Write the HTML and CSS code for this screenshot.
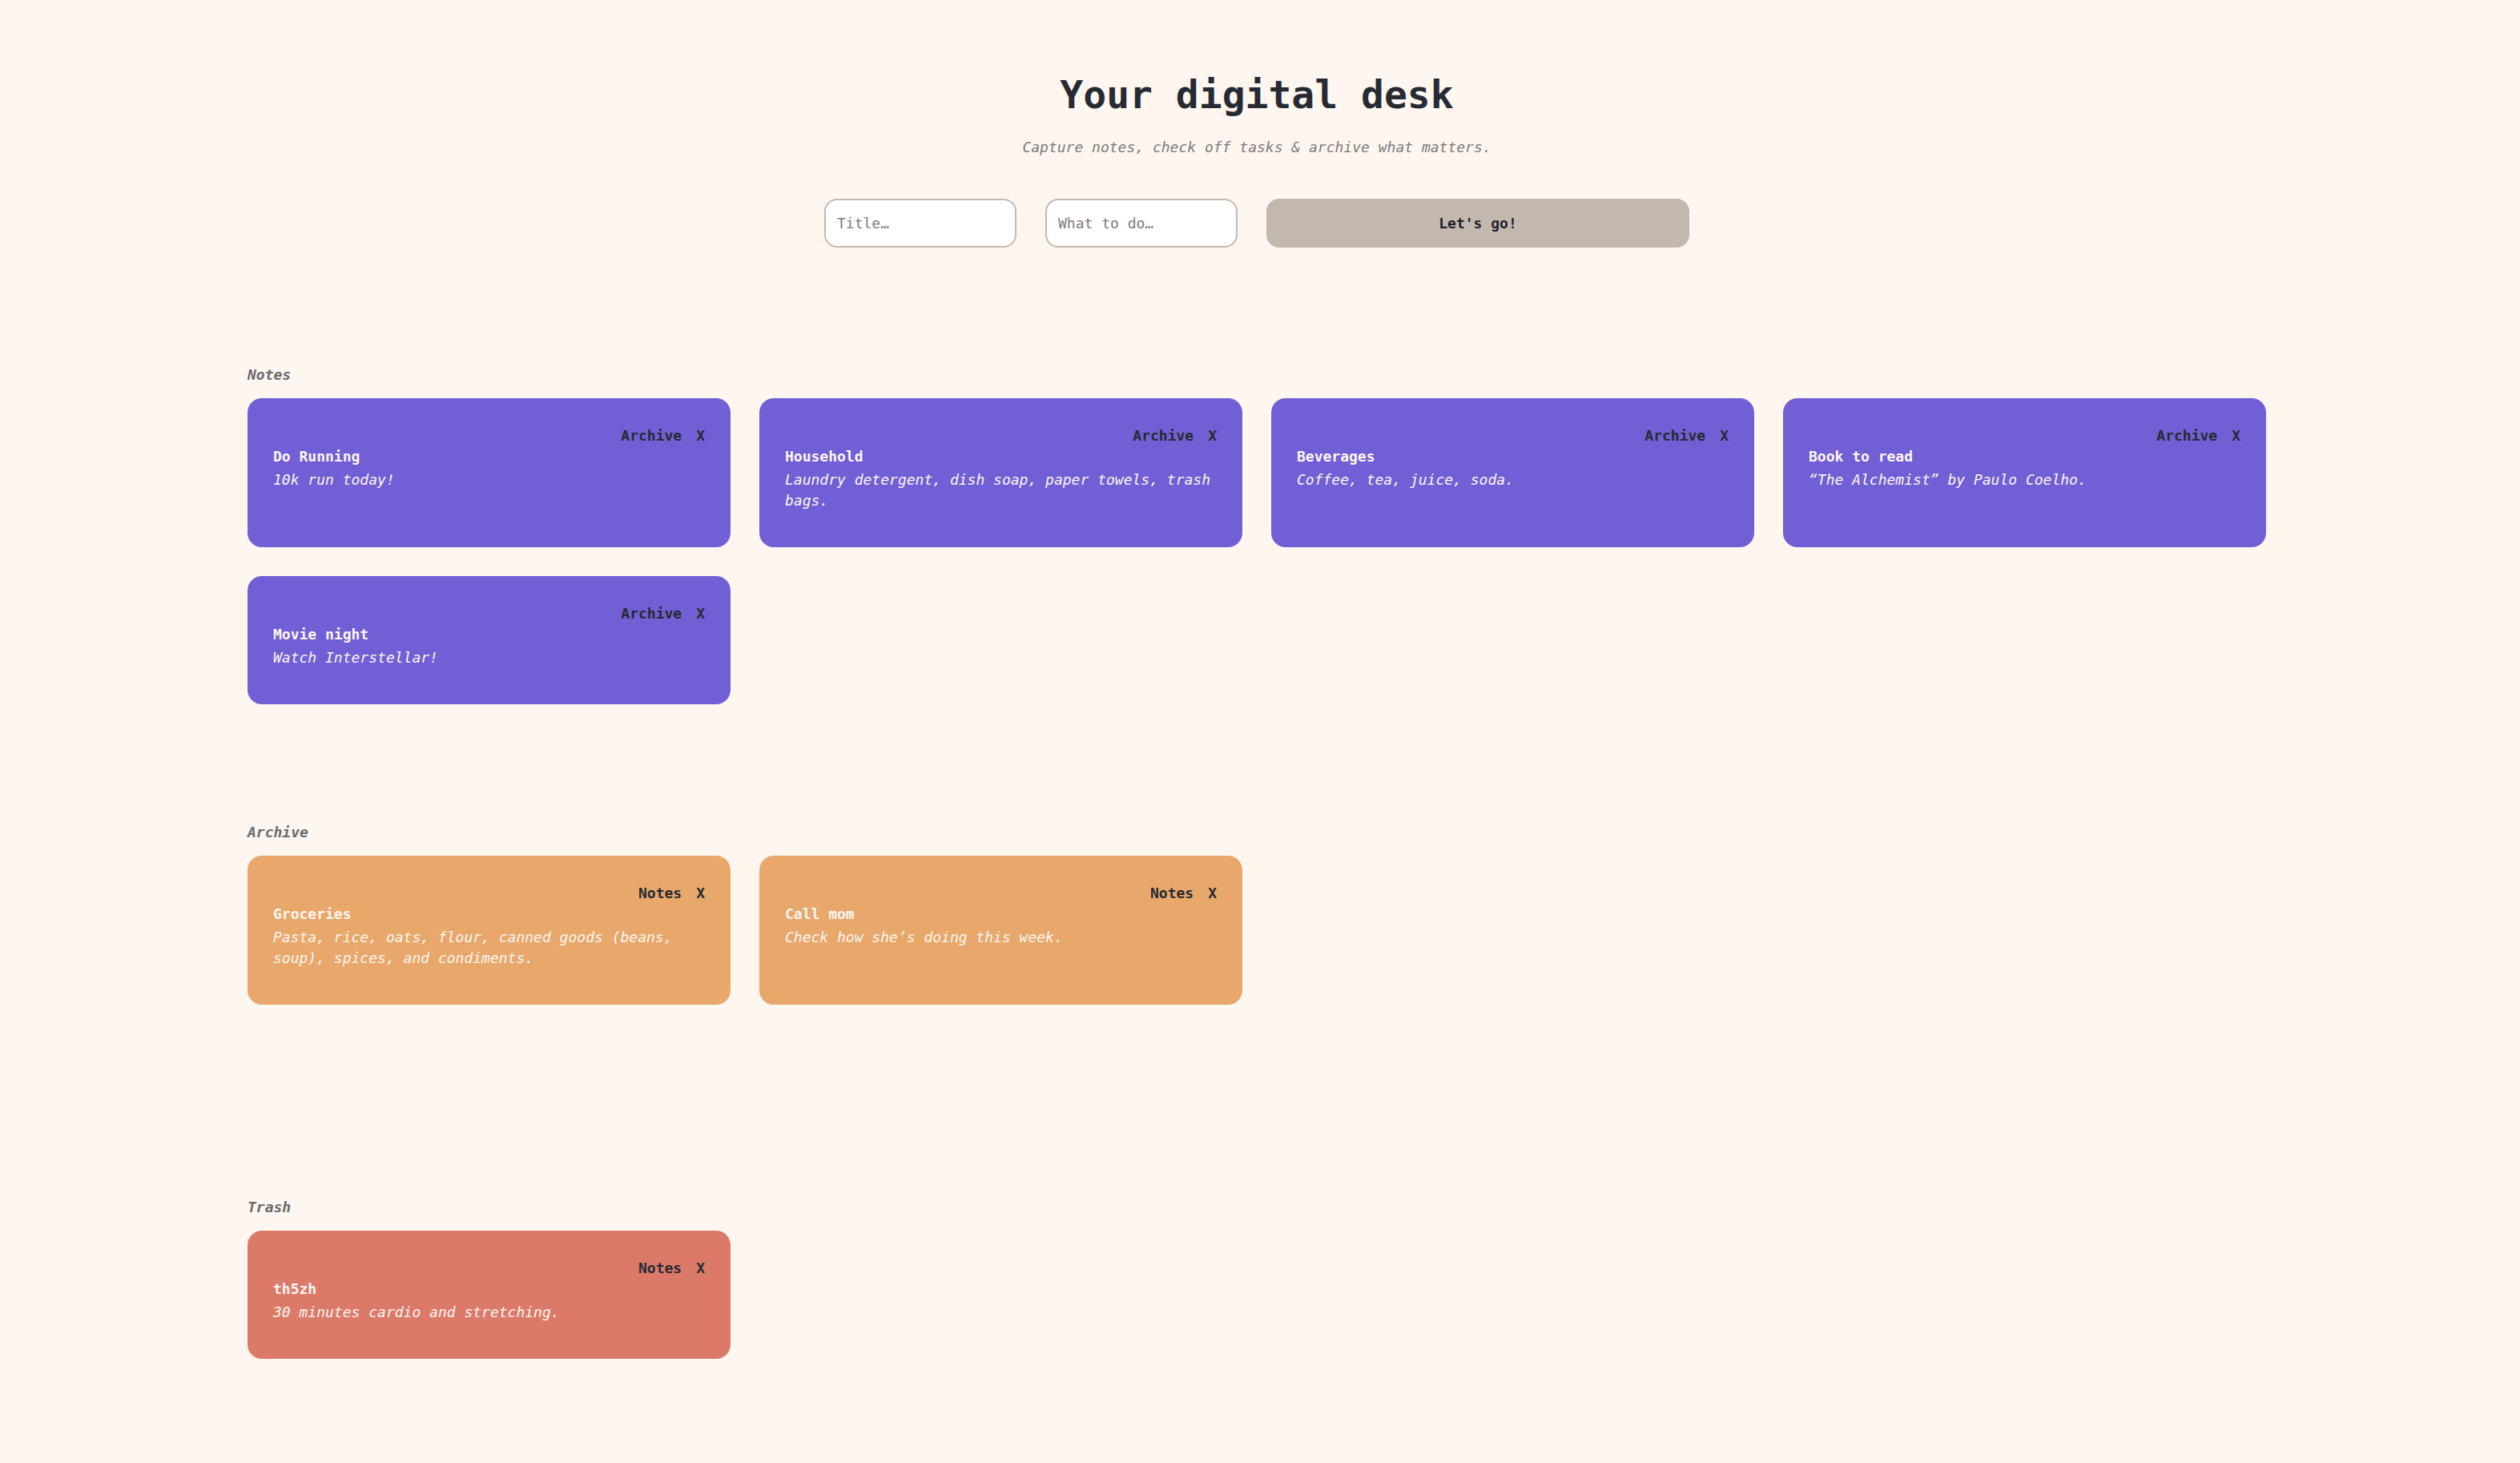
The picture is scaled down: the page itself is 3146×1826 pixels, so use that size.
FILE: index.html
```html
<!DOCTYPE html>
<html lang="en">
<head>
<meta charset="utf-8">
<title>Your digital desk</title>
<link rel="stylesheet" href="styles.css">
</head>
<body>
<div class="page">
  <header class="hero">
    <h1 class="hero__title">Your digital desk</h1>
    <p class="hero__subtitle">Capture notes, check off tasks &amp; archive what matters.</p>
    <form class="composer">
      <input class="composer__input" type="text" placeholder="Title…">
      <input class="composer__input" type="text" placeholder="What to do…">
      <button class="composer__button" type="button">Let's go!</button>
    </form>
  </header>

  <section class="board board--notes">
    <h2 class="board__label">Notes</h2>
    <div class="board__grid">
      <article class="card card--note">
        <div class="card__actions"><span>Archive</span><span>X</span></div>
        <h3 class="card__title">Do Running</h3>
        <p class="card__text">10k run today!</p>
      </article>
      <article class="card card--note">
        <div class="card__actions"><span>Archive</span><span>X</span></div>
        <h3 class="card__title">Household</h3>
        <p class="card__text">Laundry detergent, dish soap, paper towels, trash bags.</p>
      </article>
      <article class="card card--note">
        <div class="card__actions"><span>Archive</span><span>X</span></div>
        <h3 class="card__title">Beverages</h3>
        <p class="card__text">Coffee, tea, juice, soda.</p>
      </article>
      <article class="card card--note">
        <div class="card__actions"><span>Archive</span><span>X</span></div>
        <h3 class="card__title">Book to read</h3>
        <p class="card__text">“The Alchemist” by Paulo Coelho.</p>
      </article>
      <article class="card card--note">
        <div class="card__actions"><span>Archive</span><span>X</span></div>
        <h3 class="card__title">Movie night</h3>
        <p class="card__text">Watch Interstellar!</p>
      </article>
    </div>
  </section>

  <section class="board board--archive">
    <h2 class="board__label">Archive</h2>
    <div class="board__grid">
      <article class="card card--archived">
        <div class="card__actions"><span>Notes</span><span>X</span></div>
        <h3 class="card__title">Groceries</h3>
        <p class="card__text">Pasta, rice, oats, flour, canned goods (beans, soup), spices, and condiments.</p>
      </article>
      <article class="card card--archived">
        <div class="card__actions"><span>Notes</span><span>X</span></div>
        <h3 class="card__title">Call mom</h3>
        <p class="card__text">Check how she’s doing this week.</p>
      </article>
    </div>
  </section>

  <section class="board board--trash">
    <h2 class="board__label">Trash</h2>
    <div class="board__grid">
      <article class="card card--trashed">
        <div class="card__actions"><span>Notes</span><span>X</span></div>
        <h3 class="card__title">th5zh</h3>
        <p class="card__text">30 minutes cardio and stretching.</p>
      </article>
    </div>
  </section>
</div>
</body>
</html>
```

FILE: styles.css
```css
html, body {
  margin: 0;
  padding: 0;
  background: #fff6f0;
}

body {
  padding-right: 8px;
  font-family: "DejaVu Sans Mono", "Liberation Mono", monospace;
  color: #262b33;
  font-size: 18px;
  line-height: 26px;
}

.page {
  max-width: 2520px;
  margin: 0 auto;
  padding-bottom: 120px;
}

.hero {
  display: flex;
  flex-direction: column;
  align-items: center;
  padding-top: 89px;
}

.hero__title {
  margin: 0;
  font-size: 48px;
  line-height: 58px;
  font-weight: 700;
  color: #262b33;
  letter-spacing: 0;
}

.hero__subtitle {
  margin: 24px 0 0;
  font-size: 18px;
  line-height: 26px;
  font-style: italic;
  color: #7a7a7a;
}

.composer {
  display: flex;
  gap: 36px;
  margin-top: 51px;
  width: 1080px;
}

.composer__input {
  box-sizing: border-box;
  width: 240px;
  height: 61px;
  padding: 0 14px;
  border: 2px solid #c5b9ae;
  border-radius: 16px;
  background: #ffffff;
  font-family: inherit;
  font-size: 18px;
  color: #262b33;
  outline: none;
}

.composer__input::placeholder {
  color: #7b7b7b;
}

.composer__button {
  flex: 1;
  height: 61px;
  border: none;
  border-radius: 16px;
  background: #c2b8ae;
  font-family: inherit;
  font-size: 18px;
  font-weight: 700;
  color: #1e2128;
}

.board {
  margin-top: 146px;
}

.board--archive {
  margin-top: 147px;
}

.board--trash {
  margin-top: 240px;
}

.board__label {
  margin: 0 0 16px;
  font-size: 18px;
  line-height: 26px;
  font-weight: 700;
  font-style: italic;
  color: #6a6a6a;
}

.board__grid {
  display: grid;
  grid-template-columns: repeat(4, 1fr);
  gap: 36px;
}

.card {
  border-radius: 18px;
  padding: 34px 32px 45px;
  color: #fff6f0;
}

.card--note {
  background: #715fd5;
}

.card--archived {
  background: #e8a86c;
}

.card--trashed {
  background: #dc7a6a;
}

.card__actions {
  display: flex;
  justify-content: flex-end;
  gap: 18px;
  font-weight: 700;
  color: #262a33;
}

.card__title {
  margin: 0;
  font-size: 18px;
  line-height: 26px;
  font-weight: 700;
}

.card__text {
  margin: 3px 0 0;
  font-style: italic;
}
```
